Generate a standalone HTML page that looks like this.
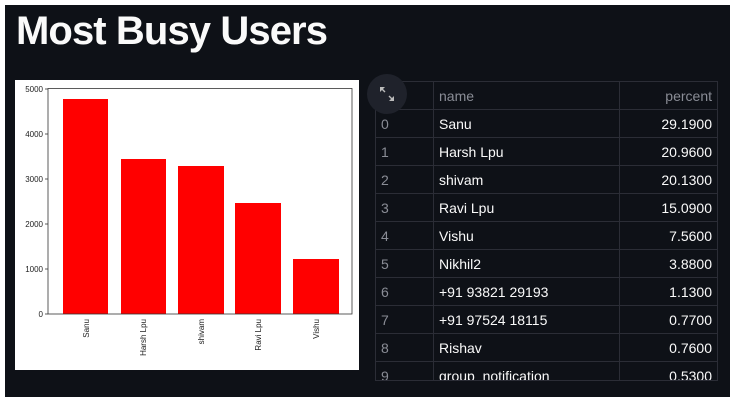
<!DOCTYPE html>
<html><head><style>
body{margin:0;background:#fff;width:735px;height:403px;overflow:hidden;position:relative;font-family:"Liberation Sans",sans-serif}
.dark{position:absolute;left:5px;top:5px;width:725px;height:392px;background:#0e1117}
h1{position:absolute;left:16px;top:9px;margin:0;color:#fafafa;font-size:40px;font-weight:bold;letter-spacing:-0.9px}
.tbl{position:absolute;left:375px;top:81px;width:343px;height:300px;overflow:hidden;border:1px solid #2b2d36;box-sizing:border-box}
.row{height:28px;border-bottom:1px solid #2b2d36;box-sizing:border-box;display:flex;color:#fafafa;font-size:14px;line-height:28px}
.row div{box-sizing:border-box;padding:0 5px}
.c0{width:58px;border-right:1px solid #2b2d36;color:#8a8d96}
.c1{width:186px;border-right:1px solid #2b2d36}
.c2{flex:1;text-align:right}
.hd{color:#8a8d96}
.btn{position:absolute;left:367px;top:74px;width:40px;height:40px;border-radius:50%;background:#1f222b}
</style></head><body>
<div class="dark"></div>
<h1>Most Busy Users</h1>
<svg style="position:absolute;left:15px;top:80px" width="344" height="290" font-family="Liberation Sans" font-size="8" fill="#222">
<rect width="344" height="290" fill="#fff"/>
<g fill="#f00">
<rect x="48" y="19" width="45" height="215"/>
<rect x="106" y="79" width="45" height="155"/>
<rect x="163" y="86" width="46" height="148"/>
<rect x="220" y="123" width="46" height="111"/>
<rect x="278" y="179" width="46" height="55"/>
</g>
<rect x="33" y="8.5" width="304" height="225.5" fill="none" stroke="#333" stroke-width="0.8"/>
<g text-anchor="end">
<text x="28" y="237">0</text><text x="28" y="192">1000</text><text x="28" y="147">2000</text><text x="28" y="102">3000</text><text x="28" y="57">4000</text><text x="28" y="12">5000</text>
</g>
<g stroke="#333" stroke-width="0.8"><line x1="30" x2="33" y1="234" y2="234"/><line x1="30" x2="33" y1="189" y2="189"/><line x1="30" x2="33" y1="144" y2="144"/><line x1="30" x2="33" y1="99" y2="99"/><line x1="30" x2="33" y1="54" y2="54"/><line x1="30" x2="33" y1="9" y2="9"/></g>
<g text-anchor="end">
<text transform="translate(74,239) rotate(-90)">Sanu</text>
<text transform="translate(131,239) rotate(-90)">Harsh Lpu</text>
<text transform="translate(189,239) rotate(-90)">shivam</text>
<text transform="translate(246,239) rotate(-90)">Ravi Lpu</text>
<text transform="translate(304,239) rotate(-90)">Vishu</text>
</g>
</svg>
<div class="tbl">
<div class="row hd"><div class="c0"></div><div class="c1">name</div><div class="c2">percent</div></div>
<div class="row"><div class="c0">0</div><div class="c1">Sanu</div><div class="c2">29.1900</div></div>
<div class="row"><div class="c0">1</div><div class="c1">Harsh Lpu</div><div class="c2">20.9600</div></div>
<div class="row"><div class="c0">2</div><div class="c1">shivam</div><div class="c2">20.1300</div></div>
<div class="row"><div class="c0">3</div><div class="c1">Ravi Lpu</div><div class="c2">15.0900</div></div>
<div class="row"><div class="c0">4</div><div class="c1">Vishu</div><div class="c2">7.5600</div></div>
<div class="row"><div class="c0">5</div><div class="c1">Nikhil2</div><div class="c2">3.8800</div></div>
<div class="row"><div class="c0">6</div><div class="c1">+91 93821 29193</div><div class="c2">1.1300</div></div>
<div class="row"><div class="c0">7</div><div class="c1">+91 97524 18115</div><div class="c2">0.7700</div></div>
<div class="row"><div class="c0">8</div><div class="c1">Rishav</div><div class="c2">0.7600</div></div>
<div class="row"><div class="c0">9</div><div class="c1">group_notification</div><div class="c2">0.5300</div></div>
</div>
<div class="btn"><svg width="40" height="40"><g fill="#bbb"><path d="M13 13h5l-5 5z"/><path d="M27 27h-5l5-5z"/></g><g stroke="#bbb" stroke-width="1.4"><path d="M14 14l4 4M26 26l-4-4"/></g></svg></div>
</body></html>
